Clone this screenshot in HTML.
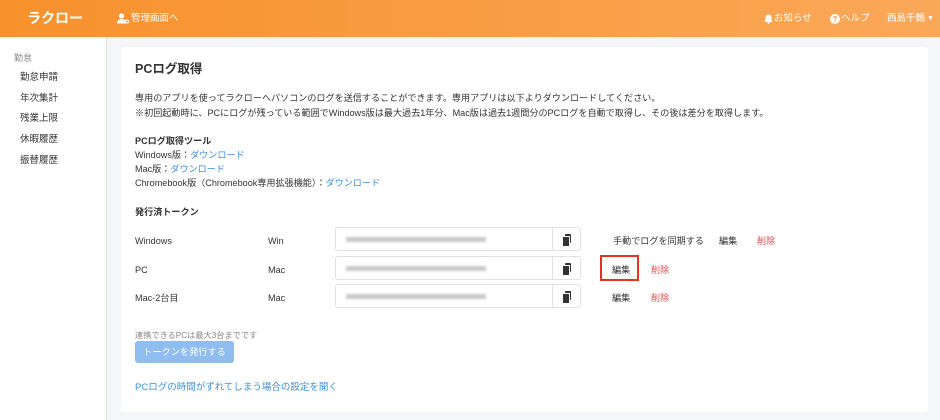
<!DOCTYPE html>
<html><head><meta charset="utf-8"><style>
*{margin:0;padding:0;box-sizing:border-box}
body{width:940px;height:420px;overflow:hidden;background:#f5f6fa;font-family:"Liberation Sans","Noto Sans CJK JP",sans-serif;color:#333;font-size:9.1px;line-height:1.2;position:relative}
.hd{position:absolute;left:0;top:0;width:940px;height:37px;background:linear-gradient(90deg,#f7912c,#fba859);color:#fff}
.hd span{position:absolute;top:13px;font-size:9.5px}
.logo{position:absolute;left:27px;top:10px;font-size:14px;font-weight:bold;color:#fff}
.sb{position:absolute;left:0;top:37px;width:107px;height:383px;background:#fff;border-right:1px solid #e3e3e3}
.sb div{position:absolute;left:20px;font-size:9.5px;color:#333;margin-top:2px}
.card{position:absolute;left:121px;top:47px;width:807px;height:365px;background:#fff;border-radius:3px}
.t{position:absolute;white-space:nowrap;margin-top:3px}
a{color:#3d8fe0;text-decoration:none}
.inp{position:absolute;left:335px;width:246px;height:24px;border:1px solid #dfe2e6;border-radius:3px}
.inp i{position:absolute;left:10px;top:9px;width:140px;height:5px;background:#c8c8c8;filter:blur(1.2px)}
.inp b{position:absolute;left:216px;top:0;width:1px;height:22px;background:#dfe2e6}
.cp{position:absolute;left:229px;top:6px;width:6px;height:9px;background:#333;border-radius:1px}
.cp:before{content:"";position:absolute;left:-3px;top:2px;width:6px;height:9px;background:#333;border:1px solid #fff}
.red{color:#e24d4d}
</style></head><body>
<div class="hd">
<div class="logo">ラクロー</div>
<svg style="position:absolute;left:117px;top:13px" width="12" height="11" viewBox="0 0 12 11"><circle cx="4.5" cy="3" r="2.6" fill="#fff"/><path d="M0 10.5c0-3 2-4.5 4.5-4.5s4.5 1.5 4.5 4.5z" fill="#fff"/><circle cx="10" cy="8.5" r="1.5" fill="none" stroke="#fff" stroke-width="1"/></svg>
<span style="left:131px">管理画面へ</span>
<svg style="position:absolute;left:764px;top:14px" width="9" height="10" viewBox="0 0 9 10"><path d="M4.5 0.5c-2 0-3 1.5-3 3.5v2.5L0.5 8h8L7.5 6.5V4c0-2-1-3.5-3-3.5z" fill="#fff"/><circle cx="4.5" cy="9" r="1" fill="#fff"/></svg>
<span style="left:774px">お知らせ</span>
<svg style="position:absolute;left:830px;top:14px" width="10" height="10" viewBox="0 0 10 10"><circle cx="5" cy="5" r="5" fill="#fff"/><text x="5" y="8.2" font-size="8" font-weight="bold" text-anchor="middle" fill="#f9a050" font-family="Liberation Sans">?</text></svg>
<span style="left:841px">ヘルプ</span>
<span style="left:887px">西島千鶴</span>
<span style="left:927px;font-size:7px;top:15px">▼</span>
</div>
<div class="sb">
<div style="left:14px;top:14px;color:#888;font-size:9px">勤怠</div>
<div style="top:33px">勤怠申請</div>
<div style="top:54px">年次集計</div>
<div style="top:74px">残業上限</div>
<div style="top:95px">休暇履歴</div>
<div style="top:116px">振替履歴</div>
</div>
<div class="card"></div>
<div class="t" style="left:135px;top:59px;font-size:12.5px;font-weight:bold;color:#333">PCログ取得</div>
<div class="t" style="left:135px;top:90px">専用のアプリを使ってラクローへパソコンのログを送信することができます。専用アプリは以下よりダウンロードしてください。</div>
<div class="t" style="left:135px;top:105px">※初回起動時に、PCにログが残っている範囲でWindows版は最大過去1年分、Mac版は過去1週間分のPCログを自動で取得し、その後は差分を取得します。</div>
<div class="t" style="left:135px;top:133px;font-weight:bold">PCログ取得ツール</div>
<div class="t" style="left:135px;top:147px">Windows版：<a>ダウンロード</a></div>
<div class="t" style="left:135px;top:161px">Mac版：<a>ダウンロード</a></div>
<div class="t" style="left:135px;top:175px">Chromebook版（Chromebook専用拡張機能）：<a>ダウンロード</a></div>
<div class="t" style="left:135px;top:204px;font-weight:bold">発行済トークン</div>

<div class="t" style="left:135px;top:233px">Windows</div><div class="t" style="left:268px;top:233px">Win</div>
<div class="inp" style="top:227px"><i></i><b></b><div class="cp"></div></div>
<div class="t" style="left:613px;top:233px">手動でログを同期する</div><div class="t" style="left:719px;top:233px">編集</div><div class="t red" style="left:757px;top:233px">削除</div>

<div class="t" style="left:135px;top:262px">PC</div><div class="t" style="left:268px;top:262px">Mac</div>
<div class="inp" style="top:256px"><i></i><b></b><div class="cp"></div></div>
<div style="position:absolute;left:600px;top:255px;width:39px;height:26px;border:2px solid #e53323"></div>
<div class="t" style="left:612px;top:262px">編集</div><div class="t red" style="left:651px;top:262px">削除</div>

<div class="t" style="left:135px;top:290px">Mac-2台目</div><div class="t" style="left:268px;top:290px">Mac</div>
<div class="inp" style="top:284px"><i></i><b></b><div class="cp"></div></div>
<div class="t" style="left:612px;top:290px">編集</div><div class="t red" style="left:651px;top:290px">削除</div>

<div class="t" style="left:135px;top:328px;font-size:8.2px;color:#888">連携できるPCは最大3台までです</div>
<div style="position:absolute;left:135px;top:341px;width:99px;height:22px;background:#8fbdf0;border-radius:3px;color:#fff;font-size:9.2px;text-align:center;line-height:22px">トークンを発行する</div>
<div class="t" style="left:135px;top:379px;font-size:9.5px"><a>PCログの時間がずれてしまう場合の設定を開く</a></div>
</body></html>
